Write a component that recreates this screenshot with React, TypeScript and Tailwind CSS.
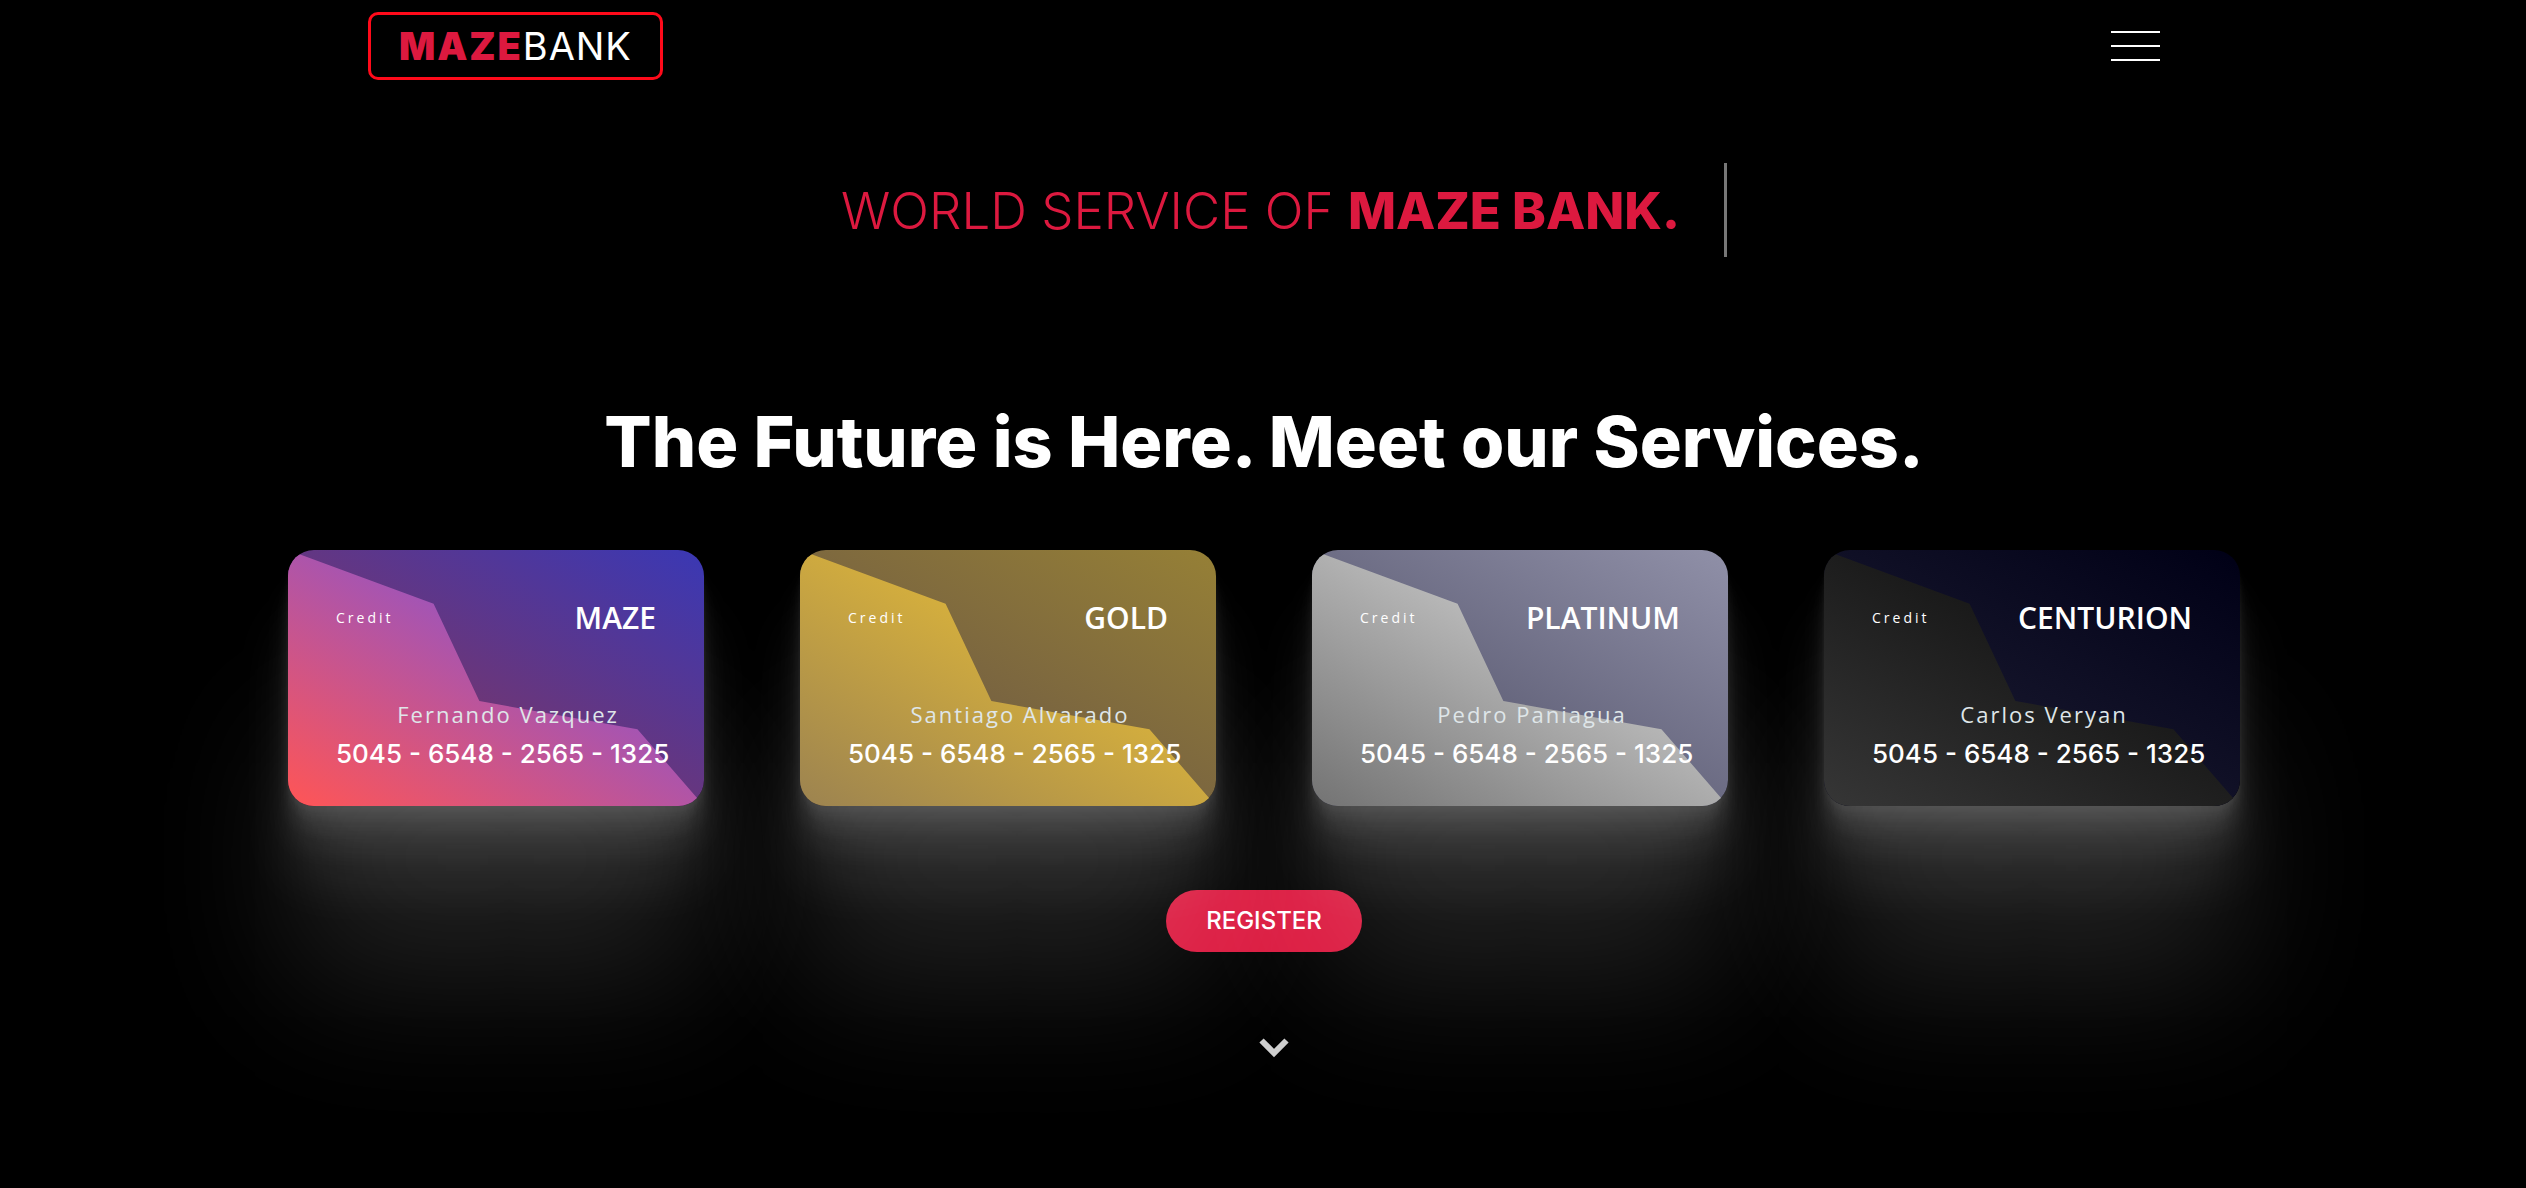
import React from "react";

type Card = {
  tier: string;
  holder: string;
  base: string;
  facet: string;
};

const cards: Card[] = [
  {
    tier: "MAZE",
    holder: "Fernando Vazquez",
    base: "bg-[linear-gradient(30deg,#91344b,#3a38b4)]",
    facet: "bg-[linear-gradient(30deg,#ff5555,#6054fa)]",
  },
  {
    tier: "GOLD",
    holder: "Santiago Alvarado",
    base: "bg-[linear-gradient(30deg,#634f48,#968036)]",
    facet: "bg-[linear-gradient(30deg,#9c8350,#fccd30)]",
  },
  {
    tier: "PLATINUM",
    holder: "Pedro Paniagua",
    base: "bg-[linear-gradient(30deg,#48485f,#9090a8)]",
    facet: "bg-[linear-gradient(30deg,#737373,#e9e9e9)]",
  },
  {
    tier: "CENTURION",
    holder: "Carlos Veryan",
    base: "bg-[linear-gradient(30deg,#212137,#000016)]",
    facet: "bg-[linear-gradient(30deg,#363636,#050505)]",
  },
];

function CreditCard({ card }: { card: Card }) {
  return (
    <li
      className={`relative h-64 w-[416px] rounded-[26px] shadow-[0_5px_4px_rgba(255,255,255,0.034),0_12px_10px_rgba(255,255,255,0.048),0_23px_18px_rgba(255,255,255,0.06),0_40px_32px_rgba(255,255,255,0.072),0_75px_60px_rgba(255,255,255,0.086),0_180px_144px_rgba(255,255,255,0.12)] ${card.base}`}
    >
      <div
        className={`absolute inset-0 rounded-[26px] [clip-path:polygon(0_0,35%_21%,46%_59%,84%_70%,100%_100%,0_100%)] ${card.facet}`}
      />
      <div className="relative flex h-full flex-col justify-between px-12 pt-12 pb-8">
        <div className="flex items-center justify-between">
          <span className="text-sm font-medium tracking-[3px]">Credit</span>
          <span className="text-[30px] leading-10 font-semibold">{card.tier}</span>
        </div>
        <div className="-mr-6 whitespace-nowrap">
          <p className="text-center text-[22px] leading-10 font-medium tracking-[2px] text-[#dfe6e9]">
            {card.holder}
          </p>
          <p className="font-[Inter,sans-serif] text-[26px] leading-10 font-medium">
            5045 - 6548 - 2565 - 1325
          </p>
        </div>
      </div>
    </li>
  );
}

export default function App() {
  return (
    <div className="flex min-h-screen flex-col items-center overflow-x-hidden bg-black pl-0.5 font-['Open_Sans',sans-serif] text-white">
      <header className="flex w-full max-w-[1792px] items-center justify-between pt-3">
        <a
          href="#home"
          className="rounded-[10px] border-3 border-[#ff0a1a] px-7 py-2 font-[Inter,sans-serif] text-[38px] leading-[46px]"
        >
          <span className="font-black tracking-wider text-[#dc193f]">MAZE</span>
          <span className="tracking-wide">BANK</span>
        </a>
        <button type="button" aria-label="Open menu" className="flex w-[49px] flex-col gap-3">
          <span className="h-[2px] w-full bg-white" />
          <span className="h-[2px] w-full bg-white" />
          <span className="h-[2px] w-full bg-white" />
        </button>
      </header>

      <main className="flex w-full flex-col items-center">
        <div className="mt-[83px] ml-10 flex h-[94px] items-center border-r-3 border-[#777] pr-11 font-[Inter,sans-serif]">
          <p className="text-[51px] leading-none font-normal whitespace-pre text-[#dc193f]">
            <span className="font-light">WORLD SERVICE OF </span>
            <strong className="font-extrabold">MAZE BANK.</strong>
          </p>
        </div>

        <h1 className="mt-[141px] font-[Inter,sans-serif] text-[70px] leading-[88px] font-extrabold">
          The Future is Here. Meet our Services.
        </h1>

        <ul className="relative z-10 mt-16 flex flex-wrap justify-center gap-24">
          {cards.map((card) => (
            <CreditCard key={card.tier} card={card} />
          ))}
        </ul>

        <button
          type="button"
          className="mt-21 h-[62px] rounded-full bg-[#dc193f] px-10 font-[Inter,sans-serif] text-2xl font-medium"
        >
          REGISTER
        </button>

        <a href="#services" aria-label="Scroll down" className="mt-[86px] ml-5">
          <svg width="30" height="20" viewBox="0 0 30 20" className="block">
            <path d="M2.5 2.5 15 15 27.5 2.5" fill="none" stroke="#cfcfcf" strokeWidth="6" />
          </svg>
        </a>
      </main>
    </div>
  );
}
